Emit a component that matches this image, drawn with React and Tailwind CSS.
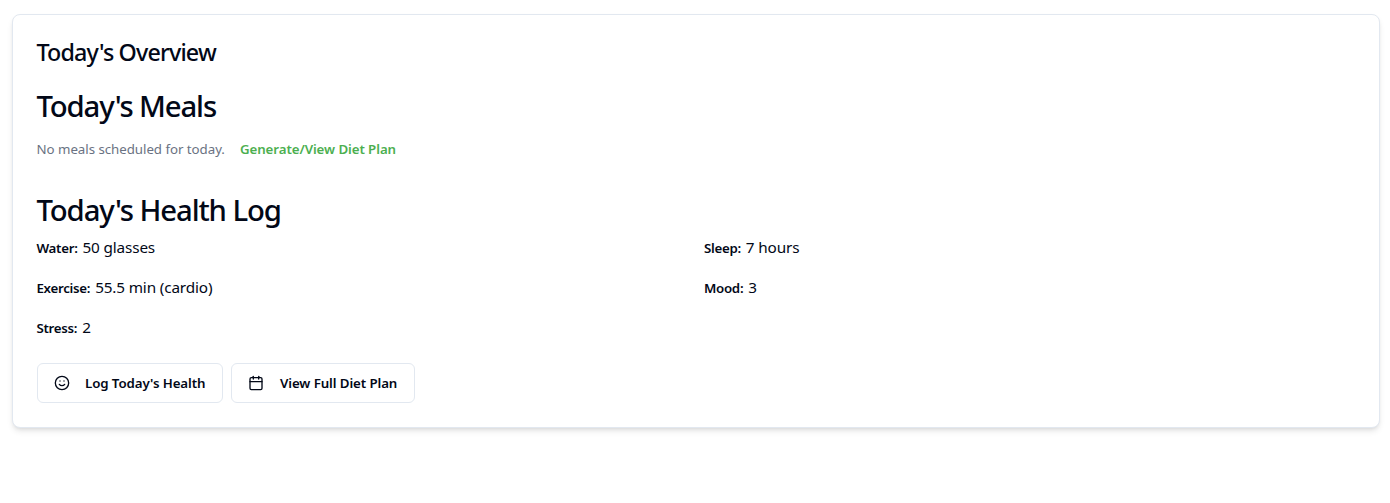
import { Smile, Calendar } from "lucide-react";

const metrics = [
  { label: "Water:", value: "50 glasses" },
  { label: "Sleep:", value: "7 hours" },
  { label: "Exercise:", value: "55.5 min (cardio)" },
  { label: "Mood:", value: "3" },
  { label: "Stress:", value: "2" },
];

function Metric({ label, value }) {
  return (
    <div className="flex h-6 items-baseline gap-[5px] whitespace-nowrap">
      <span className="text-[13.3px] font-semibold leading-6 tracking-[-0.3px]">{label}</span>
      <span className="text-[15.3px] leading-6 tracking-[-0.15px]">{value}</span>
    </div>
  );
}

export default function App() {
  return (
    <div className="min-h-[503px] bg-white pt-3.5 pr-2.5 pl-3 font-['Noto_Sans',sans-serif] text-[#020817]">
      <section className="h-[414px] rounded-lg border border-slate-200 bg-white px-[23.5px] pt-[23px] shadow-md">
        <h2 className="h-7 text-[23.3px] leading-7 font-medium tracking-[-0.85px]">Today's Overview</h2>
        <h3 className="mt-5 h-10 text-[29.3px] leading-10 font-medium tracking-[-1.15px]">Today's Meals</h3>
        <div className="mt-3.5 flex h-5 items-center gap-[15px] text-[13.3px] tracking-[-0.04px] whitespace-nowrap">
          <span className="text-gray-500">No meals scheduled for today.</span>
          <a className="font-semibold tracking-[-0.08px] text-[#4caf50]">Generate/View Diet Plan</a>
        </div>
        <h3 className="mt-[30px] h-10 text-[29.3px] leading-10 font-medium tracking-[-1.1px]">Today's Health Log</h3>
        <div className="mt-[5px] grid grid-cols-2 gap-x-4 gap-y-4">
          {metrics.map((m) => (
            <Metric key={m.label} {...m} />
          ))}
        </div>
        <div className="mt-6 flex gap-2 pl-[0.5px] text-[13.3px] font-semibold tracking-[-0.1px] whitespace-nowrap">
          <button className="flex h-10 w-[186px] items-center gap-[15px] rounded-md border border-slate-200 px-4">
            <Smile className="size-4 shrink-0" /><span className="pt-px">Log Today's Health</span>
          </button>
          <button className="flex h-10 w-[184px] items-center gap-4 rounded-md border border-slate-200 px-4">
            <Calendar className="size-4 shrink-0" /><span className="pt-px">View Full Diet Plan</span>
          </button>
        </div>
      </section>
    </div>
  );
}
